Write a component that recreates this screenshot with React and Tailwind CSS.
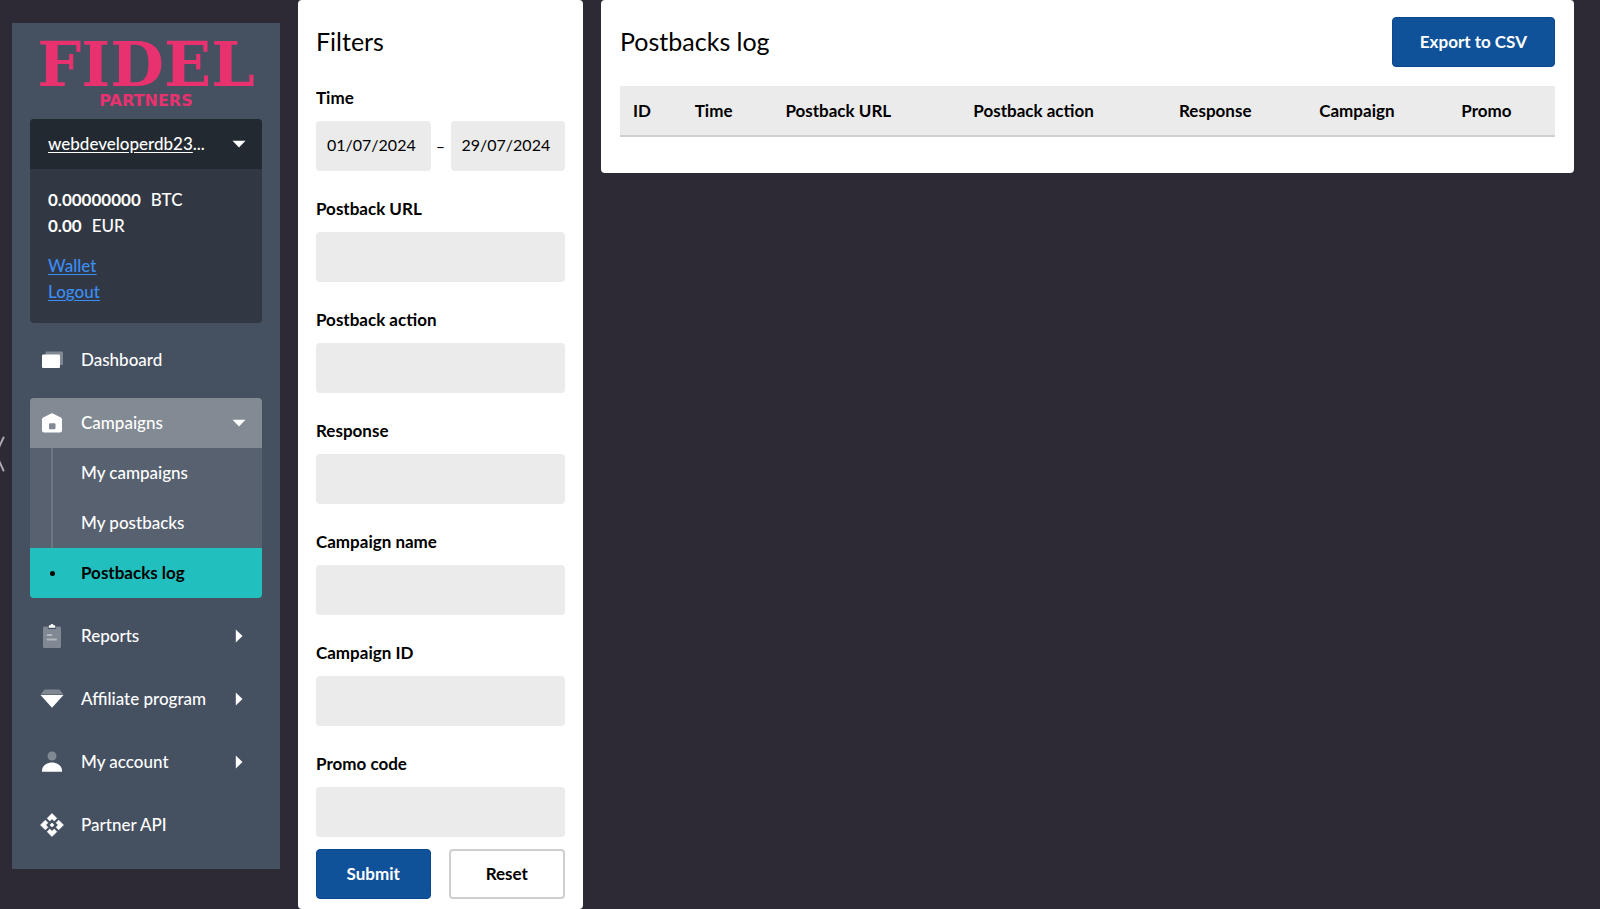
import React from "react";

function DashboardIcon() {
  return (
    <svg width="24" height="24" viewBox="0 0 24 24" aria-hidden="true">
      <rect x="5.500" y="3.500" width="17.500" height="13.500" rx="1" fill="#fff" opacity=".32" />
      <rect x="2" y="6.500" width="18" height="13.500" rx="1" fill="#fff" />
    </svg>
  );
}

function CampaignsIcon() {
  return (
    <svg width="24" height="24" viewBox="0 0 24 24" aria-hidden="true">
      <path
        fill="#fff"
        fillRule="evenodd"
        d="M11.200 2.400a1.700 1.700 0 0 1 1.600 0l8 4.200a2 2 0 0 1 1.200 1.800V19.500a2 2 0 0 1-2 2H4a2 2 0 0 1-2-2V8.400a2 2 0 0 1 1.200-1.800ZM10 12.300a1 1 0 0 0-1 1v4a1 1 0 0 0 1 1h4.500a1 1 0 0 0 1-1v-4a1 1 0 0 0-1-1Z"
      />
    </svg>
  );
}

function ReportsIcon() {
  return (
    <svg width="24" height="26" viewBox="0 0 24 26" aria-hidden="true">
      <path
        d="M4.500 3.500H7.800V4.700a1.300 1.300 0 0 0 1.300 1.300h5.800a1.300 1.300 0 0 0 1.300-1.300V3.500h3.300A1.500 1.500 0 0 1 21 5v18.500a1.500 1.500 0 0 1-1.500 1.500h-15A1.500 1.500 0 0 1 3 23.500V5a1.500 1.500 0 0 1 1.500-1.500Z"
        fill="#fff"
        opacity=".32"
      />
      <path d="M8.700 4.800V3.300a1.100 1.100 0 0 1 1.100-1.100h.6a1.700 1.700 0 0 1 3.200 0h.6a1.100 1.100 0 0 1 1.100 1.100v1.500Z" fill="#fff" />
      <path d="M7.500 12h4M7.500 16.500h8.500" stroke="#fff" strokeWidth="1.800" strokeLinecap="round" opacity=".4" />
    </svg>
  );
}

function DiamondIcon() {
  return (
    <svg width="24" height="24" viewBox="0 0 24 24" aria-hidden="true">
      <path d="M4.500 2.500h15L23.500 7.500H.5Z" fill="#fff" opacity=".32" />
      <path d="M.5 8h23L12 20.800Z" fill="#fff" />
    </svg>
  );
}

function AccountIcon() {
  return (
    <svg width="24" height="24" viewBox="0 0 24 24" aria-hidden="true">
      <circle cx="12" cy="6" r="4.500" fill="#fff" opacity=".32" />
      <path d="M2 21.800v-1c0-4.600 4-8.300 10-8.300s10 3.700 10 8.300v1Z" fill="#fff" />
    </svg>
  );
}

function ApiIcon() {
  return (
    <svg width="24" height="24" viewBox="0.500 0.500 23 23" aria-hidden="true" fill="#fff" stroke="#fff" strokeWidth="0.600" strokeLinejoin="round">
      <path d="m14 12-2 2-2-2 2-2Z" />
      <path d="m12 6 2.120 2.120 2.500-2.500L12 1 7.380 5.620l2.500 2.500Z" />
      <path d="m6 12 2.120-2.120-2.500-2.500L1 12l4.620 4.620 2.500-2.500Z" />
      <path d="m18 12-2.120 2.120 2.500 2.500L23 12l-4.620-4.620-2.500 2.500Z" />
      <path d="m12 18-2.120-2.120-2.500 2.500L12 23l4.620-4.620-2.500-2.500Z" />
    </svg>
  );
}

function CaretDown() {
  return (
    <svg width="14" height="14" viewBox="0 0 14 14" aria-hidden="true">
      <path d="M0.500 3.800h13L7 10.500Z" fill="#fff" />
    </svg>
  );
}

function CaretRight() {
  return (
    <svg width="14" height="14" viewBox="0 0 14 14" aria-hidden="true">
      <path d="M3.800 0.500v13L10.500 7Z" fill="#fff" />
    </svg>
  );
}

function NavItem({ icon, label, expandable }) {
  return (
    <a href="#" className="flex h-[50px] items-center pl-2.5 pr-4">
      <span className="flex w-6 shrink-0 justify-center">{icon}</span>
      <span className="ml-[17px] grow">{label}</span>
      {expandable && <CaretRight />}
    </a>
  );
}

function Sidebar() {
  return (
    <aside className="mt-[23px] w-[268px] shrink-0 self-start bg-[#455061] px-[18px] pb-[19px] text-[17px] font-medium text-white">
      <a href="#" className="flex h-24 flex-col items-center pt-4 text-[#e8316f]">
        <span className="font-['DejaVu_Serif',serif] text-[62px] font-bold leading-[52px]">FIDEL</span>
        <span className="mt-0.5 font-['DejaVu_Sans',sans-serif] text-base font-bold leading-4">PARTNERS</span>
      </a>

      <section className="overflow-hidden rounded-[4px] bg-[#313843]">
        <button type="button" className="flex h-[50px] w-full items-center justify-between bg-[#222930] pl-[18px] pr-4">
          <span>
            <span className="underline underline-offset-2">webdeveloperdb23</span>...
          </span>
          <CaretDown />
        </button>
        <div className="p-[18px] leading-[26px]">
          <p>
            <b className="mr-2.5">0.00000000</b>BTC
          </p>
          <p>
            <b className="mr-2.5">0.00</b>EUR
          </p>
          <div className="mt-3.5 flex flex-col items-start text-[#3b8df5] underline underline-offset-2">
            <a href="#">Wallet</a>
            <a href="#">Logout</a>
          </div>
        </div>
      </section>

      <nav className="mt-3 flex flex-col gap-[13px]">
        <NavItem icon={<DashboardIcon />} label="Dashboard" />
        <div className="overflow-hidden rounded-[4px] bg-[#576170]">
          <button type="button" className="flex h-[50px] w-full items-center bg-[#828a93] pl-2.5 pr-4 text-left">
            <CampaignsIcon />
            <span className="ml-[17px] grow">Campaigns</span>
            <CaretDown />
          </button>
          <div className="ml-[21px] border-l-2 border-[#6d7683]">
            <a href="#" className="flex h-[50px] items-center pl-7">My campaigns</a>
            <a href="#" className="flex h-[50px] items-center pl-7">My postbacks</a>
          </div>
          <a href="#" aria-current="page" className="flex h-[50px] items-center bg-[#21bfbd] pl-2.5 font-bold text-black">
            <span className="flex w-6 justify-center">
              <span className="size-[5px] rounded-full bg-black" />
            </span>
            <span className="ml-[17px]">Postbacks log</span>
          </a>
        </div>
        <NavItem icon={<ReportsIcon />} label="Reports" expandable />
        <NavItem icon={<DiamondIcon />} label="Affiliate program" expandable />
        <NavItem icon={<AccountIcon />} label="My account" expandable />
        <NavItem icon={<ApiIcon />} label="Partner API" />
      </nav>
    </aside>
  );
}

const FIELDS = [
  ["url", "Postback URL"],
  ["action", "Postback action"],
  ["response", "Response"],
  ["campaign", "Campaign name"],
  ["campaign-id", "Campaign ID"],
  ["promo", "Promo code"],
];

function Filters() {
  return (
    <form className="w-[285px] shrink-0 rounded-[4px] bg-white px-[18px] pb-2 text-[17px] text-black">
      <h2 className="pt-6 text-[25px] leading-[34px]">Filters</h2>
      <div className="mt-[26px] flex flex-col gap-6">
        <fieldset>
          <legend className="h-[37px] font-bold leading-[28px]">Time</legend>
          <div className="flex items-center text-base">
            <input
              aria-label="From date"
              defaultValue="01/07/2024"
              className="h-[50px] w-0 min-w-0 grow rounded-[4px] bg-[#ebebeb] pb-1 pl-[11px]"
            />
            <span className="w-5 text-center">–</span>
            <input
              aria-label="To date"
              defaultValue="29/07/2024"
              className="h-[50px] w-0 min-w-0 grow rounded-[4px] bg-[#ebebeb] pb-1 pl-[11px]"
            />
          </div>
        </fieldset>
        {FIELDS.map(([id, label]) => (
          <div key={id} className="flex flex-col">
            <label htmlFor={id} className="h-[37px] font-bold leading-[28px]">
              {label}
            </label>
            <input id={id} className="h-[50px] w-full rounded-[4px] bg-[#ebebeb] px-[11px]" />
          </div>
        ))}
      </div>
      <div className="mt-3 flex gap-[18px] font-bold">
        <button type="submit" className="h-[50px] flex-1 rounded-[4px] border border-[#0a478f] bg-[#105299] text-white">
          Submit
        </button>
        <button type="reset" className="h-[50px] flex-1 rounded-[4px] border-2 border-[#cfcfcf] bg-white">
          Reset
        </button>
      </div>
    </form>
  );
}

function PostbacksLog() {
  return (
    <main className="min-w-0 grow self-start rounded-[4px] bg-white px-[19px] pb-9 pt-[17px] text-[17px] text-black">
      <div className="flex items-start justify-between">
        <h1 className="pt-[7px] text-[25px] leading-[34px]">Postbacks log</h1>
        <button type="button" className="h-[50px] rounded-[4px] border border-[#0a478f] bg-[#105299] px-[27px] font-bold text-white">
          Export to CSV
        </button>
      </div>
      <table className="mt-[19px] w-full table-fixed border-b-2 border-[#d0d0d0] bg-[#ebebeb] text-left">
        <thead>
          <tr className="h-[50px]">
            <th className="w-[6.6%] pl-[13px]">ID</th>
            <th className="w-[9.7%] pl-[13px]">Time</th>
            <th className="w-[20.1%] pl-[13px]">Postback URL</th>
            <th className="w-[22%] pl-[13px]">Postback action</th>
            <th className="w-[15%] pl-[13px]">Response</th>
            <th className="w-[15.2%] pl-[13px]">Campaign</th>
            <th className="pl-[13px]">Promo</th>
          </tr>
        </thead>
      </table>
    </main>
  );
}

export default function App() {
  return (
    <div className="relative flex min-h-screen gap-[18px] overflow-hidden bg-[#2d2a35] pl-3 pr-[26px] font-['Lato',sans-serif]">
      <button type="button" aria-label="Collapse menu" className="absolute left-0 top-[436px]">
        <svg width="6" height="36" viewBox="0 0 6 36" fill="none" stroke="#a9a8ae" strokeWidth="2" strokeLinecap="round" aria-hidden="true">
          <path d="M3.500 1.500-4 18l7.500 16.500" />
        </svg>
      </button>
      <Sidebar />
      <Filters />
      <PostbacksLog />
    </div>
  );
}
